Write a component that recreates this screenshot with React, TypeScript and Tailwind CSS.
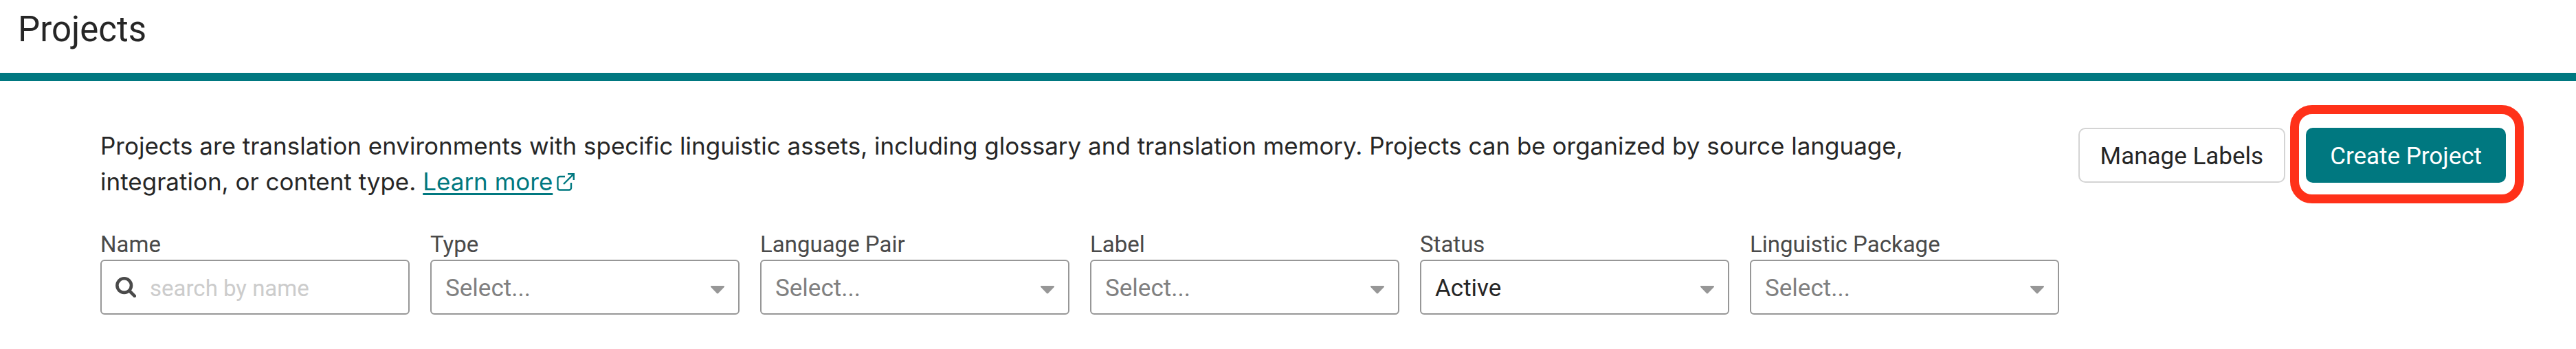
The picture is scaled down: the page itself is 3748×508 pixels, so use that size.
const filters = [
  { id: "type", label: "Type", value: "" },
  { id: "language-pair", label: "Language Pair", value: "" },
  { id: "label", label: "Label", value: "" },
  { id: "status", label: "Status", value: "Active" },
  { id: "linguistic-package", label: "Linguistic Package", value: "" },
];

const SearchIcon = () => (
  <svg
    viewBox="0 0 30 30"
    className="size-[30px] shrink-0 text-[#4a4a4a]"
    fill="none"
    stroke="currentColor"
    aria-hidden="true"
  >
    <circle cx="12.7" cy="12.6" r="10.3" strokeWidth="4.6" />
    <path d="M20.5 20.5L27.8 27.8" strokeWidth="4.6" strokeLinecap="round" />
  </svg>
);

const ExternalIcon = () => (
  <svg
    viewBox="0 0 26 26"
    className="inline-block size-[26px] ml-1.5 align-[-1px]"
    fill="none"
    stroke="currentColor"
    strokeWidth="2.4"
    aria-hidden="true"
  >
    <path d="M12 5H4.5A3 3 0 0 0 1.5 8V21.5A3 3 0 0 0 4.5 24.5H18A3 3 0 0 0 21 21.5V14" />
    <path d="M10 16L24.5 1.5" />
    <path d="M16 1.3H24.8V10" />
  </svg>
);

const CaretIcon = () => (
  <svg
    viewBox="0 0 20 12"
    className="absolute right-[22px] top-1/2 h-3 w-5 -translate-y-0.5 pointer-events-none text-[#979797]"
    fill="currentColor"
    aria-hidden="true"
  >
    <path d="M1.2 0H18.8C19.9 0 20.4 1.2 19.6 2L11 11.1C10.4 11.7 9.6 11.7 9 11.1L0.4 2C-0.4 1.2 0.1 0 1.2 0Z" />
  </svg>
);

const SelectField = ({ id, label, value }: { id: string; label: string; value: string }) => (
  <div className="flex-1">
    <label htmlFor={id} className="block mb-0.5 text-[33px] leading-10 text-[#4a4a4a]">
      {label}
    </label>
    <div className="relative">
      <select
        id={id}
        defaultValue={value}
        className={`appearance-none w-full h-20 pt-1 pl-5 pr-14 text-[35px] bg-transparent border-2 border-[#979797] rounded-md ${
          value ? "text-[#262626]" : "text-[#808080]"
        }`}
      >
        <option value="">Select...</option>
        {value && <option value={value}>{value}</option>}
      </select>
      <CaretIcon />
    </div>
  </div>
);

const App = () => {
  return (
    <div className="bg-white text-[#262626] font-['Roboto',sans-serif]">
      <header className="h-[118px] pl-[26px] pt-[11px] border-b-12 border-[#007880]">
        <h1 className="text-[51px] leading-16">Projects</h1>
      </header>

      <main className="pt-[68px] pl-[146px] pr-[102px] pb-12">
        <div className="flex items-start justify-between">
          <p className="max-w-[2700px] text-[35px] leading-[52px] font-['Inter',sans-serif]">
            Projects are translation environments with specific linguistic assets, including
            glossary and translation memory. Projects can be organized by source language,
            integration, or content type.{" "}
            <a
              href="#learn-more"
              className="text-[#007880] underline decoration-3 underline-offset-4 whitespace-nowrap"
            >
              Learn more
              <ExternalIcon />
            </a>
          </p>

          <div className="flex shrink-0 gap-[30px] text-[35px]">
            <button
              type="button"
              className="h-20 px-[30px] pt-1 bg-white border-2 border-[#d4d4d4] rounded-[10px]"
            >
              Manage Labels
            </button>
            <div className="relative">
              <button
                type="button"
                className="h-20 px-[35px] pt-1 bg-[#007880] text-white rounded-[10px]"
              >
                Create Project
              </button>
              <span className="absolute -left-[23px] -right-[26px] -top-[33px] -bottom-[30px] border-13 border-[#ff3119] rounded-[32px] pointer-events-none" />
            </div>
          </div>
        </div>

        <form className="flex gap-[30px] mt-[46px] max-w-[2850px]">
          <div className="flex-1">
            <label htmlFor="name" className="block mb-0.5 text-[33px] leading-10 text-[#4a4a4a]">
              Name
            </label>
            <div className="flex items-center gap-5 h-20 px-5 border-2 border-[#979797] rounded-md">
              <SearchIcon />
              <input
                id="name"
                type="text"
                placeholder="search by name"
                className="w-full pt-1 text-[33px] outline-none placeholder:text-[#cccccc]"
              />
            </div>
          </div>
          {filters.map((filter) => (
            <SelectField key={filter.id} {...filter} />
          ))}
        </form>
      </main>
    </div>
  );
};

export default App;
